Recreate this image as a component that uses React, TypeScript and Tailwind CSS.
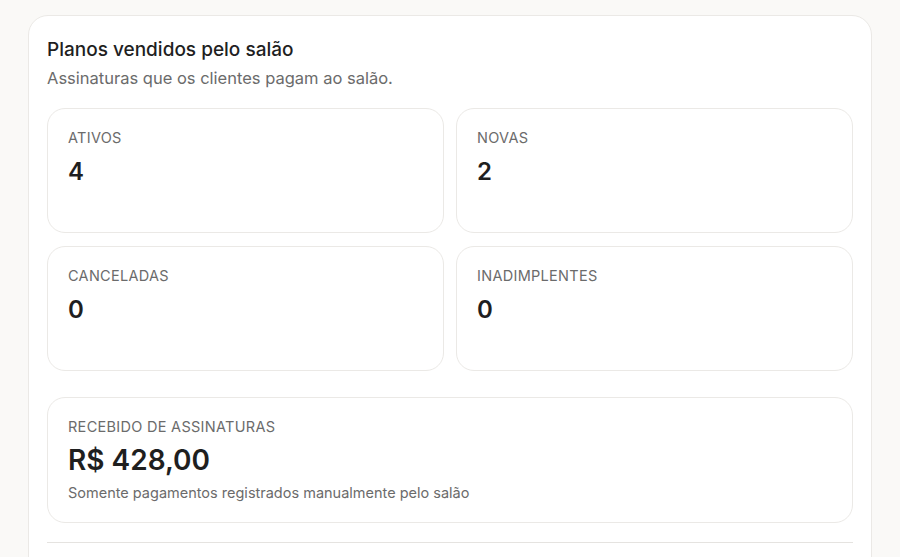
// Painel de planos vendidos pelo salão
const stats = [
	{ label: 'Ativos', value: '4' },
	{ label: 'Novas', value: '2' },
	{ label: 'Canceladas', value: '0' },
	{ label: 'Inadimplentes', value: '0' },
]

function StatCard({ label, value }: { label: string; value: string }) {
	return (
		<div className="h-[125px] rounded-[18px] border border-[#ebe9e6] bg-white px-5 pt-[19px]">
			<p className="text-[14.5px] uppercase tracking-[0.02em] leading-5 text-[#6b6b6b]">{label}</p>
			<p className="mt-2 text-2xl leading-8 font-semibold text-[#1f1f1f]">{value}</p>
		</div>
	)
}

export default function App() {
	return (
		<div
			className="min-h-screen bg-[#faf9f7] px-7 pt-[15px]"
			style={{ fontFamily: 'Inter, "Noto Sans", sans-serif' }}
		>
			<section className="h-[600px] rounded-t-[20px] border border-[#ebe9e6] bg-white px-[18px] pt-5">
				{/* Cabeçalho */}
				<h2 className="text-[19px] leading-7 font-medium text-[#1f1f1f]">Planos vendidos pelo salão</h2>
				<p className="mt-[2px] text-[16.5px] leading-6 text-[#6b6b6b]">Assinaturas que os clientes pagam ao salão.</p>

				{/* Métricas */}
				<div className="mt-[18px] grid grid-cols-2 gap-x-3 gap-y-[13px]">
					{stats.map((s) => (
						<StatCard key={s.label} label={s.label} value={s.value} />
					))}
				</div>

				{/* Receita */}
				<div className="mt-[26px] h-[126px] rounded-[18px] border border-[#ebe9e6] bg-white px-5 pt-[19px]">
					<p className="text-[14.5px] uppercase tracking-[0.02em] leading-5 text-[#6b6b6b]">Recebido de assinaturas</p>
					<p className="mt-[5px] text-[28px] leading-9 font-semibold text-[#1f1f1f]">R$ 428,00</p>
					<p className="mt-[5px] text-[14.5px] leading-5 text-[#6b6b6b]">Somente pagamentos registrados manualmente pelo salão</p>
				</div>

				<div className="mt-[19px] border-t border-[#e5e3e0]" />
			</section>
		</div>
	)
}
